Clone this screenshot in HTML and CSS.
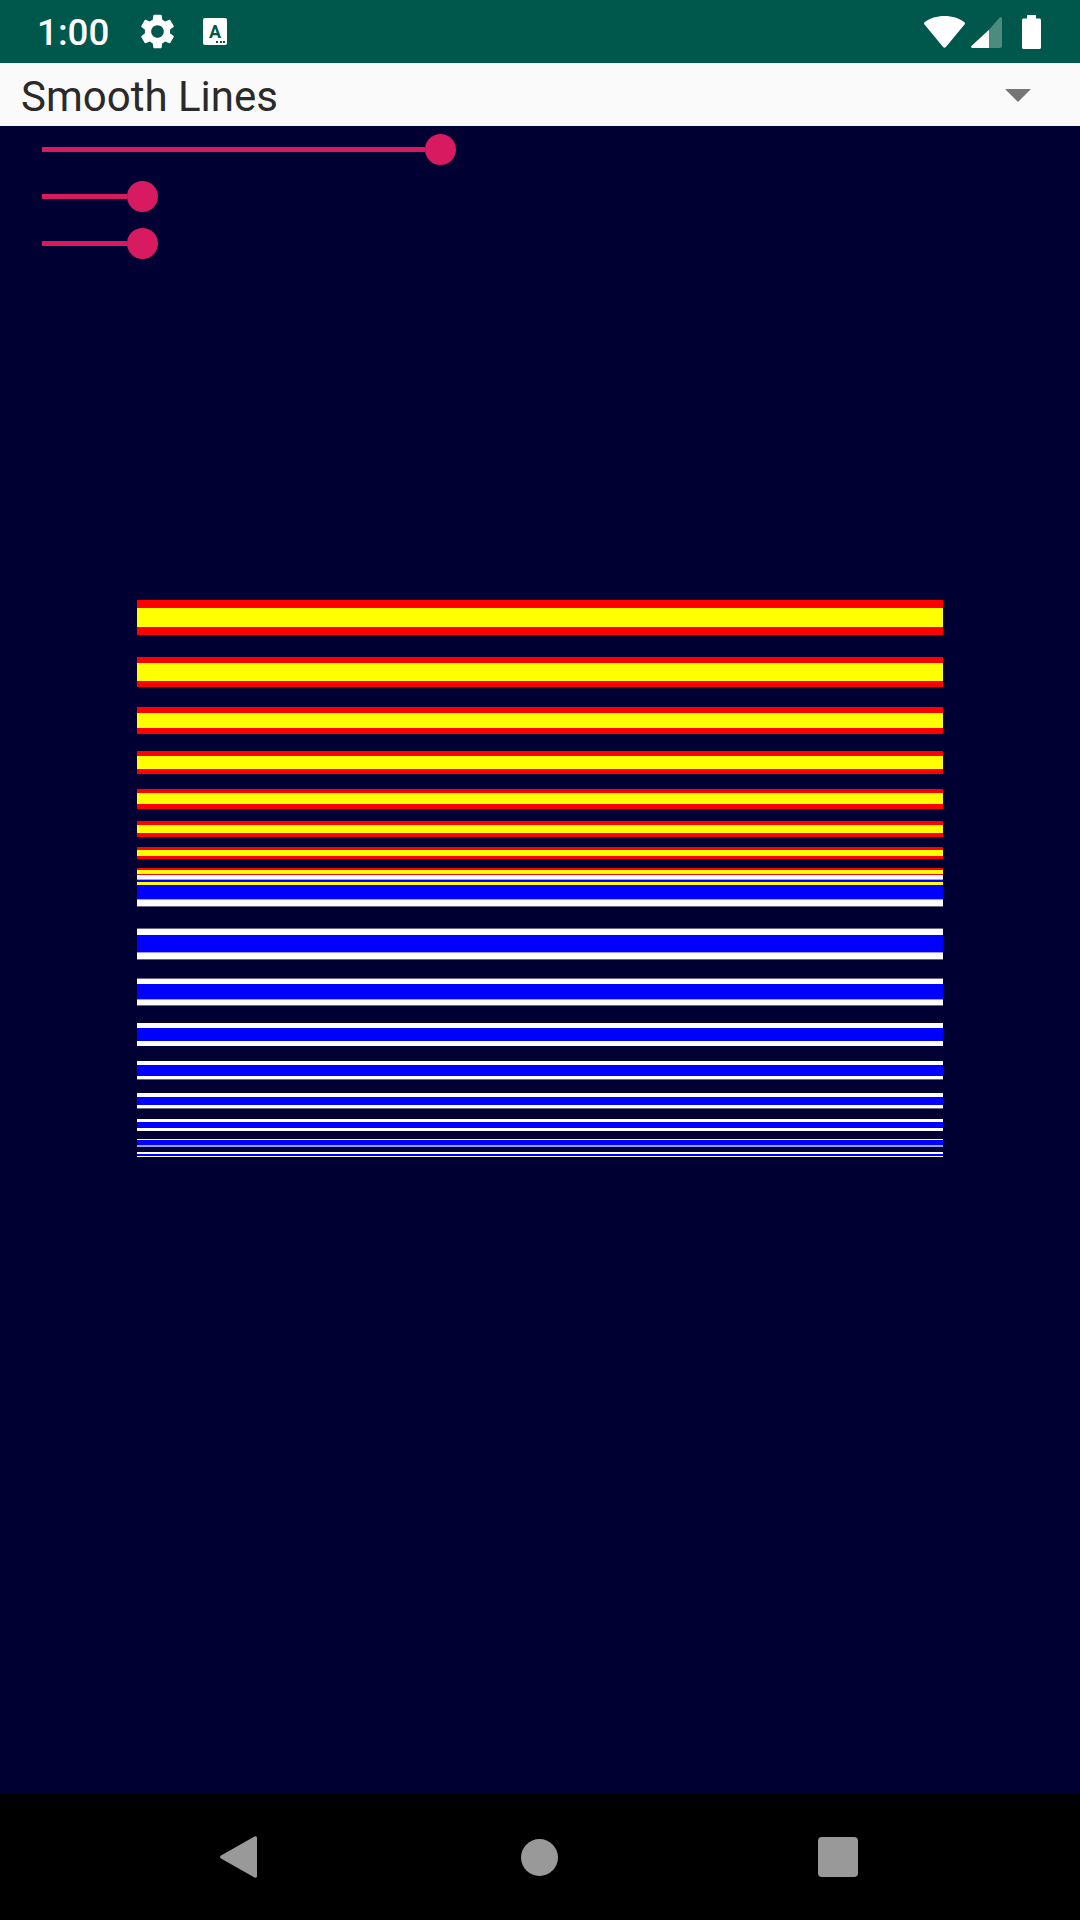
FILE: index.html
```html
<!DOCTYPE html>
<html lang="en">
<head>
  <title>Smooth Lines</title>
  <link rel="stylesheet" href="styles.css">
</head>
<body>
  <div class="screen">
    <div class="status-bar">
      <span class="clock">1:00</span>
      <svg class="icon-gear" viewBox="2.6 2 18.8 20"><path d="M19.14 12.94c.04-.3.06-.61.06-.94 0-.32-.02-.64-.07-.94l2.03-1.58c.18-.14.23-.41.12-.61l-1.92-3.32c-.12-.22-.37-.29-.59-.22l-2.39.96c-.5-.38-1.03-.7-1.62-.94l-.36-2.54c-.04-.24-.24-.41-.48-.41h-3.84c-.24 0-.43.17-.47.41l-.36 2.54c-.59.24-1.13.57-1.62.94l-2.39-.96c-.22-.08-.47 0-.59.22L2.74 8.87c-.12.21-.08.47.12.61l2.03 1.58c-.05.3-.09.63-.09.94s.02.64.07.94l-2.03 1.58c-.18.14-.23.41-.12.61l1.92 3.32c.12.22.37.29.59.22l2.39-.96c.5.38 1.03.7 1.62.94l.36 2.54c.05.24.24.41.48.41h3.84c.24 0 .44-.17.47-.41l.36-2.54c.59-.24 1.13-.56 1.62-.94l2.39.96c.22.08.47 0 .59-.22l1.92-3.32c.12-.22.07-.47-.12-.61l-2.01-1.58zM12 15.6c-1.98 0-3.6-1.62-3.6-3.6s1.62-3.6 3.6-3.6 3.6 1.62 3.6 3.6-1.62 3.6-3.6 3.6z"/></svg>
      <div class="icon-a">
        <span class="icon-a-letter">A</span>
        <span class="icon-a-dots"><i></i><i></i><i></i></span>
      </div>
      <div class="status-right">
        <svg class="icon-wifi" viewBox="0 0 41 32"><path d="M20.5 0C12.5 0 6 2.2.6 6.2c-.7.5-.8 1.4-.3 2l18.8 22.9c.7.9 2.1.9 2.8 0L40.7 8.200c.5-.6.4-1.500-.3-2C35 2.200 28.500 0 20.500 0z"/></svg>
        <svg class="icon-signal" viewBox="0 0 31 31"><path class="signal-dim" d="M18 12.800 28.600.6c.8-.9 2.400-.4 2.400.9V29c0 1.100-.9 2-2 2H18z"/><path d="M18 12.800V31H1.200C.2 31-.3 29.800.4 29.100z"/></svg>
        <svg class="icon-battery" viewBox="0 0 19 34"><path d="M6 0h7c.6 0 1 .4 1 1v2.500h3.500c.8 0 1.500.7 1.500 1.500v27.500c0 .8-.7 1.500-1.500 1.500h-16C.7 34 0 33.300 0 32.500V5c0-.8.7-1.500 1.500-1.500H5V1c0-.6.4-1 1-1z"/></svg>
      </div>
    </div>

    <div class="spinner">
      <span class="spinner-text">Smooth Lines</span>
      <span class="spinner-arrow"></span>
    </div>

    <div class="content">
      <div class="sliders">
        <div class="slider slider-long"><div class="track"></div><div class="thumb"></div></div>
        <div class="slider slider-short"><div class="track"></div><div class="thumb"></div></div>
        <div class="slider slider-short"><div class="track"></div><div class="thumb"></div></div>
      </div>

      <div class="lines">
        <div class="red" style="height:8px"></div><div class="yellow" style="height:19px"></div><div class="red" style="height:8px"></div><div style="height:22px"></div>
        <div class="red" style="height:6px"></div><div class="yellow" style="height:18px"></div><div class="red" style="height:6px"></div><div style="height:20px"></div>
        <div class="red" style="height:6px"></div><div class="yellow" style="height:15px"></div><div class="red" style="height:6px"></div><div style="height:17px"></div>
        <div class="red" style="height:5px"></div><div class="yellow" style="height:13px"></div><div class="red" style="height:5px"></div><div style="height:15px"></div>
        <div class="red" style="height:4px"></div><div class="yellow" style="height:11px"></div><div class="red" style="height:5px"></div><div style="height:12px"></div>
        <div class="red" style="height:4px"></div><div class="yellow" style="height:8px"></div><div class="red" style="height:4px"></div><div style="height:10px"></div>
        <div class="red" style="height:3px"></div><div class="yellow" style="height:6px"></div><div class="red" style="height:3px"></div><div style="height:9px"></div>
        <div class="red" style="height:2px"></div><div class="yellow" style="height:4px"></div><div class="red" style="height:1px"></div>
        <div class="white" style="height:4px"></div><div class="lavender" style="height:1px"></div><div class="blue" style="height:2px"></div><div class="yellow" style="height:3px"></div>
        <div class="blue" style="height:14px"></div><div class="lavender" style="height:1px"></div><div class="white" style="height:6px"></div><div class="dim" style="height:1px"></div><div style="height:21px"></div>
        <div class="dim" style="height:1px"></div><div class="white" style="height:6px"></div><div class="blue" style="height:17px"></div><div class="lavender" style="height:1px"></div><div class="white" style="height:6px"></div><div class="dim" style="height:1px"></div><div style="height:18px"></div>
        <div class="dim" style="height:1px"></div><div class="white" style="height:5px"></div><div class="blue" style="height:15px"></div><div class="lavender" style="height:1px"></div><div class="white" style="height:5px"></div><div class="dim" style="height:1px"></div><div style="height:17px"></div>
        <div class="white" style="height:5px"></div><div class="blue" style="height:13px"></div><div class="white" style="height:5px"></div><div style="height:15px"></div>
        <div class="white" style="height:4px"></div><div class="blue" style="height:11px"></div><div class="white" style="height:3px"></div><div class="dim" style="height:1px"></div><div style="height:13px"></div>
        <div class="white" style="height:4px"></div><div class="blue" style="height:8px"></div><div class="white" style="height:3px"></div><div class="dim" style="height:1px"></div><div style="height:10px"></div>
        <div class="white" style="height:3px"></div><div class="blue" style="height:6px"></div><div class="white" style="height:3px"></div><div style="height:8px"></div>
        <div class="white" style="height:1px"></div><div class="blue" style="height:5px"></div><div class="lavender" style="height:2px"></div><div style="height:5px"></div>
        <div class="white" style="height:2px"></div><div class="blue" style="height:2px"></div><div class="white" style="height:1px"></div>
      </div>
    </div>

    <div class="nav-bar">
      <svg class="nav-back" viewBox="0 0 37 42"><path d="M1 19.500 34.500.5C35.800-.3 37 .5 37 2v38c0 1.500-1.200 2.300-2.500 1.500L1 22.500c-1.300-.8-1.300-2.200 0-3z"/></svg>
      <div class="nav-home"></div>
      <div class="nav-recent"></div>
    </div>
  </div>
</body>
</html>
```

FILE: styles.css
```css
body {
  margin: 0;
  font-family: Roboto, sans-serif;
}
.screen {
  width: 1080px;
  height: 1920px;
  display: flex;
  flex-direction: column;
  overflow: hidden;
}

/* status bar */
.status-bar {
  height: 63px;
  flex: none;
  display: flex;
  align-items: center;
  padding-left: 37px;
  padding-right: 39px;
  box-sizing: border-box;
  background-color: #00574b;
}
.clock {
  width: 104px;
  margin-top: 3px;
  color: #fff;
  font-size: 36.75px;
  font-weight: 500;
  line-height: 60px;
}
.icon-gear {
  width: 33px;
  height: 35px;
  fill: #fff;
}
.icon-a {
  width: 24px;
  height: 27px;
  margin-left: 29px;
  margin-bottom: 1px;
  border-radius: 2px;
  background-color: #fff;
  position: relative;
  display: flex;
  justify-content: center;
}
.icon-a-letter {
  color: #00574b;
  font-size: 18px;
  font-weight: 700;
  line-height: 27px;
}
.icon-a-dots {
  position: absolute;
  right: 2px;
  bottom: 2px;
  display: flex;
  gap: 1.5px;
}
.icon-a-dots i {
  width: 2px;
  height: 2px;
  background-color: #00574b;
}
.status-right {
  margin-left: auto;
  display: flex;
  align-items: center;
}
.icon-wifi {
  width: 41px;
  height: 32px;
  fill: #fff;
}
.icon-signal {
  width: 31px;
  height: 31px;
  margin-left: 6px;
  margin-top: 1px;
  fill: #fff;
}
.signal-dim {
  fill: #4d8b81;
}
.icon-battery {
  width: 19px;
  height: 34px;
  margin-left: 20px;
  fill: #fff;
}

/* spinner */
.spinner {
  height: 63px;
  flex: none;
  display: flex;
  align-items: center;
  padding-left: 21px;
  padding-right: 49px;
  box-sizing: border-box;
  background-color: #fafafa;
}
.spinner-text {
  margin-top: 3px;
  color: #2a2a2a;
  font-size: 42px;
}
.spinner-arrow {
  margin-left: auto;
  margin-top: 2px;
  width: 0;
  height: 0;
  border-left: 13px solid transparent;
  border-right: 13px solid transparent;
  border-top: 13px solid #757575;
}

/* sliders and lines */
.content {
  flex: 1;
  background-color: #000033;
  padding-top: 8px;
}
.sliders {
  display: flex;
  flex-direction: column;
  gap: 16px;
  margin-left: 42px;
}
.slider {
  display: flex;
  align-items: center;
}
.slider-long {
  width: 414px;
}
.slider-short {
  width: 116px;
}
.track {
  flex: 1;
  height: 5px;
  background-color: #d81b60;
}
.thumb {
  width: 31px;
  height: 31px;
  border-radius: 50%;
  background-color: #d81b60;
}
.lines {
  width: 806px;
  margin-top: 341px;
  margin-left: 137px;
}
.red {
  background-color: #ff0000;
}
.yellow {
  background-color: #ffff00;
}
.blue {
  background-color: #0000ff;
}
.white {
  background-color: #ffffff;
}
.lavender {
  background-color: #9999ff;
}
.dim {
  background-color: #666685;
}

/* nav bar */
.nav-bar {
  height: 126px;
  flex: none;
  display: flex;
  align-items: center;
  background-color: #000;
}
.nav-back {
  width: 37px;
  height: 42px;
  margin-left: 220px;
  fill: #999;
}
.nav-home {
  width: 37px;
  height: 37px;
  margin-left: 264px;
  border-radius: 50%;
  background-color: #999;
}
.nav-recent {
  width: 40px;
  height: 40px;
  margin-left: 260px;
  border-radius: 4px;
  background-color: #999;
}
```
